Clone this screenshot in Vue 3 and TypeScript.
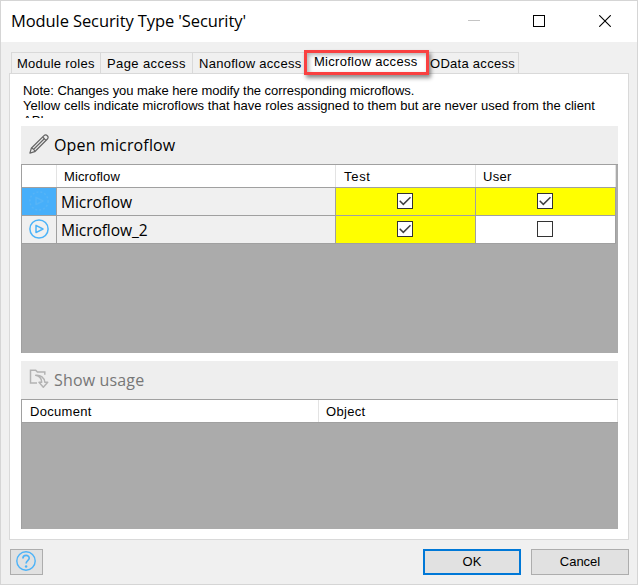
<script setup lang="ts">
import { ref } from 'vue'

interface Microflow {
  name: string
  selected: boolean
  test: boolean
  user: boolean
}

const tabs = [
  { label: 'Module roles', key: 'roles' },
  { label: 'Page access', key: 'page' },
  { label: 'Nanoflow access', key: 'nano' },
  { label: 'Microflow access', key: 'micro' },
  { label: 'OData access', key: 'odata' },
]
const activeTab = ref('micro')

const rows = ref<Microflow[]>([
  { name: 'Microflow', selected: true, test: true, user: true },
  { name: 'Microflow_2', selected: false, test: true, user: false },
])
</script>

<template>
  <div class="dialog">
    <header class="titlebar">
      <h1 class="title">Module Security Type 'Security'</h1>
      <div class="controls">
        <svg width="12" height="12" shape-rendering="crispEdges"><path d="M0 5.5H12" stroke="#c4c4c4" /></svg>
        <svg width="12" height="12" shape-rendering="crispEdges"><path d="M.5 .5H11.5V11.5H.5Z" fill="none" stroke="#000" /></svg>
        <svg width="12" height="12"><path d="M.2 .2L11.8 11.8M11.8 .2L.2 11.8" stroke="#000" stroke-width="1.1" /></svg>
      </div>
    </header>

    <nav class="tabs">
      <button
        v-for="tab in tabs"
        :key="tab.key"
        class="tab"
        :class="[tab.key, { active: tab.key === activeTab }]"
        @click="activeTab = tab.key"
      ><span class="tab-label">{{ tab.label }}</span></button>
    </nav>

    <main class="panel">
      <div class="note">
        <div class="n1">Note: Changes you make here modify the corresponding microflows.</div>
        <div class="n2">Yellow cells indicate microflows that have roles assigned to them but are never used from the client</div>
        <div>API.</div>
      </div>

      <div class="toolbar">
        <svg class="tool-icon" width="20" height="20" viewBox="0 0 20 20" fill="none" stroke="#666" stroke-width="1.25" stroke-linejoin="round">
          <path d="M.9 19.1L2.3 14.3L15 1.6C16 .6 17.2 .6 18.3 1.7C19.4 2.8 19.4 4 18.4 5L5.7 17.7Z" />
          <path d="M2.3 14.3C4 14.3 5.6 15.9 5.7 17.7M4.2 15.8L15.8 4.2M13.6 3L17 6.4" />
        </svg>
        <span class="open-label">Open microflow</span>
      </div>

      <section class="grid access">
        <div class="head cols">
          <div></div>
          <div class="h-name">Microflow</div>
          <div class="h-test">Test</div>
          <div class="h-user">User</div>
        </div>
        <div v-for="row in rows" :key="row.name" class="row cols">
          <div class="marker" :class="{ selected: row.selected }">
            <svg width="20" height="20" viewBox="0 0 20 20" fill="none" stroke-width="1.5">
              <circle cx="10" cy="10" r="9.1" :stroke-dasharray="row.selected ? '2 2' : undefined" />
              <path d="M7 6.4V13.6L14 10Z" stroke-linejoin="round" />
            </svg>
          </div>
          <div class="name">{{ row.name }}</div>
          <div class="check" :class="{ granted: row.test }">
            <button class="box" @click="row.test = !row.test">
              <svg v-if="row.test" width="14" height="14" fill="none" stroke="#404040" stroke-width="1.5"><path d="M1.7 6.8L5.3 10.4L12.5 3.2" /></svg>
            </button>
          </div>
          <div class="check" :class="{ granted: row.user }">
            <button class="box" @click="row.user = !row.user">
              <svg v-if="row.user" width="14" height="14" fill="none" stroke="#404040" stroke-width="1.5"><path d="M1.7 6.8L5.3 10.4L12.5 3.2" /></svg>
            </button>
          </div>
        </div>
      </section>

      <div class="toolbar second">
        <svg class="tool-icon" width="20" height="20" viewBox="0 0 20 20" fill="none" stroke="#b3b3b3" stroke-width="1.5">
          <path d="M8 13.9H1.5V1.2H6.7L8.4 3.1H15.8V5.8" />
          <path d="M6.7 6.3C11.5 5.8 15.6 8.4 15.8 13.3H18.7L14.3 18.2L10 13.3H12.7C12.7 9.8 10.4 7.1 6.7 6.3Z" stroke-linejoin="round" />
        </svg>
        <span class="usage-label">Show usage</span>
      </div>

      <section class="grid usage">
        <div class="head usage-cols">
          <div class="h-doc">Document</div>
          <div class="h-object">Object</div>
        </div>
      </section>
    </main>

    <footer class="footer">
      <button class="btn help" aria-label="Help">
        <svg width="20" height="20" viewBox="0 0 20 20" fill="none" stroke="#4db3f8" stroke-width="1.4">
          <circle cx="10" cy="10" r="9.2" />
          <path d="M6.9 7.4C6.9 3.4 13.3 3.5 13.2 7.2C13.2 9.3 10.1 9.4 10.1 12.6" stroke-width="1.7" />
          <circle cx="10.1" cy="15.4" r="1.25" fill="#4db3f8" stroke="none" />
        </svg>
      </button>
      <button class="btn ok"><span>OK</span></button>
      <button class="btn cancel"><span>Cancel</span></button>
    </footer>
  </div>
</template>

<style>
body {
  margin: 0;
}
</style>

<style scoped>
* {
  box-sizing: border-box;
}
button {
  font: inherit;
  color: inherit;
  letter-spacing: inherit;
  padding: 0;
  margin: 0;
  border-radius: 0;
}
svg {
  display: block;
  flex: none;
}
.dialog {
  width: 638px;
  height: 585px;
  border: 1px solid #d5d5d5;
  background: #f0f0f0;
  color: #000;
  font: 13px/15px "Liberation Sans", Arial, sans-serif;
  display: flex;
  flex-direction: column;
  overflow: hidden;
  white-space: nowrap;
}
.titlebar {
  height: 41px;
  flex: none;
  background: #fff;
  display: flex;
  justify-content: space-between;
  padding: 0 26px 0 10px;
}
.title {
  margin: 0;
  font: 400 16.5px/40px "Open Sans", "Noto Sans", sans-serif;
  letter-spacing: -0.1px;
}
.controls {
  display: flex;
  gap: 53px;
  padding-top: 14px;
}
.controls svg:nth-child(2) {
  margin-right: 1px;
}
.tabs {
  height: 31px;
  flex: none;
  display: flex;
  align-items: flex-end;
  padding-left: 10px;
  letter-spacing: 0.28px;
}
.tab {
  height: 21px;
  border: 1px solid #d9d9d9;
  border-bottom: 0;
  background: #f0f0f0;
  text-align: left;
  padding-left: 5px;
  flex: none;
  overflow: visible;
}
.roles { width: 90px; }
.page { width: 93px; margin-left: -1px; padding-left: 6px; letter-spacing: 0.4px; }
.nano { width: 113px; margin-left: -1px; padding-left: 6px; }
.odata { width: 92px; margin-left: -2px; padding-left: 2px; }
.micro { width: 125px; }
.active {
  height: 25px;
  margin: 0 0 -2px -1px;
  border: 3px solid #f94141;
  background: #fff;
  padding: 0 0 2px 7px;
  position: relative;
  z-index: 1;
  box-shadow: 2px 3px 4px rgba(0, 0, 0, 0.45), inset 2px 2px 4px rgba(0, 0, 0, 0.3);
}
.panel {
  height: 467px;
  flex: none;
  margin: 0 8px;
  border: 1px solid #d9d9d9;
  background: #fff;
  padding: 9px 10px 0 11px;
}
.note {
  height: 35px;
  overflow: hidden;
  padding-left: 2px;
}
.n1 {
  letter-spacing: -0.05px;
}
.n2 {
  letter-spacing: 0.03px;
}
.toolbar {
  height: 38px;
  margin-top: 8px;
  background: #eee;
  display: flex;
  align-items: center;
  gap: 5px;
  padding-left: 8px;
  font: 16px/36px "Open Sans", "Noto Sans", sans-serif;
  letter-spacing: 0.15px;
}
.tool-icon {
  margin-top: -2px;
}
.second {
  color: #777;
}
.grid {
  background: #ababab;
  border-top: 1px solid #a0a0a0;
  border-left: 1px solid #a0a0a0;
}
.access {
  height: 189px;
}
.usage {
  height: 130px;
}
.cols {
  display: grid;
  grid-template-columns: 35px 279px 140px 140px;
  width: 594px;
}
.head {
  height: 23px;
  background: #fff;
  border-bottom: 1px solid #a0a0a0;
  line-height: 22px;
  letter-spacing: 0.3px;
}
.head > div {
  border-right: 1px solid #e3e3e3;
  padding-left: 8px;
}
.access .head {
  line-height: 23px;
  grid-template-rows: 22px;
}
.usage .head {
  line-height: 23px;
  grid-template-rows: 22px;
}
.head > .h-name {
  padding-left: 7px;
  letter-spacing: 0.12px;
}
.head > .h-test {
  letter-spacing: 0.7px;
}
.head > .h-user,
.head > .h-object {
  padding-left: 7px;
}
.usage-cols {
  display: grid;
  grid-template-columns: 297px 1fr;
}
.row {
  height: 28px;
  grid-template-rows: 27px;
  border-bottom: 1px solid #a0a0a0;
}
.row > div {
  border-right: 1px solid #a0a0a0;
}
.marker {
  background: #f0f0f0;
  padding: 3px 0 0 7px;
  stroke: #4db3f8;
}
.marker.selected {
  background: #47affa;
  stroke: #56b4f7;
}
.name {
  background: #f0f0f0;
  padding-left: 4px;
  font: 15.6px/28px "Open Sans", "Noto Sans", sans-serif;
  letter-spacing: -0.1px;
}
.check {
  background: #fff;
  padding: 5px 0 0 61px;
}
.check.granted {
  background: #ff0;
}
.box {
  display: block;
  width: 16px;
  height: 16px;
  border: 1px solid #333;
  background: #fff;
}
.footer {
  display: flex;
  padding: 9px 8px 0 9px;
  gap: 10px;
}
.btn {
  width: 98px;
  height: 26px;
  border: 1px solid #adadad;
  background: #e1e1e1;
  padding-bottom: 2px;
}
.help {
  width: 33px;
  margin-right: auto;
  padding: 0 0 2px 5px;
}
.ok {
  border: 2px solid #0078d7;
}
</style>
